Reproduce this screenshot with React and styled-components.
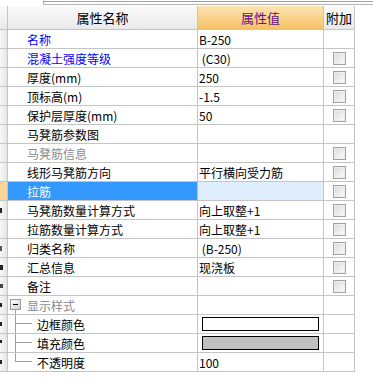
import React from "react";
import styled, { createGlobalStyle, css } from "styled-components";

const Global = createGlobalStyle`
  html, body { margin: 0; padding: 0; background: #fff; }
  body {
    font-family: "Noto Sans CJK SC", "Noto Sans", sans-serif;
    font-size: 12px;
    color: #000;
  }
`;

const Page = styled.div`
  width: 373px;
  height: 384px;
  background: #fff;
  overflow: hidden;
`;

const TopStrip = styled.div`
  display: flex;
  height: 6px;
`;

const StripSpacer = styled.div`
  width: 43px;
`;

const StripFrame = styled.div`
  flex: 1;
  box-sizing: border-box;
  height: 5px;
  border-left: 1px solid #a8a8a8;
  border-top: 1px solid #fff;
  border-bottom: 1px solid #b4b4b4;
  box-shadow: inset 0 1px 0 #a0a0a0;
`;

const Grid = styled.div`
  display: grid;
  grid-template-columns: 8px 190px 126px 31px;
  width: 355px;
`;

const cellBase = css`
  box-sizing: border-box;
  border-right: 1px solid #c4c4c4;
  border-bottom: 1px solid #c4c4c4;
  display: flex;
  align-items: center;
  overflow: hidden;
  white-space: pre;
`;

const HeadCell = styled.div`
  ${cellBase};
  height: 24px;
  justify-content: center;
  font-size: 13px;
  background: ${(p) =>
    p.$accent
      ? "linear-gradient(#fde4b4, #f5c264)"
      : "linear-gradient(#fbfbfb, #e9e9e9)"};
  color: ${(p) => (p.$accent ? "#68108c" : "#000")};
`;

const GutterCell = styled.div`
  ${cellBase};
  height: 19px;
  justify-content: flex-start;
  background: ${(p) =>
    p.$active ? "#fbd59a" : "linear-gradient(90deg, #f6f6f6, #e6e6e6)"};
`;

/* the clipped right edge of a row number, seen as a small mark */
const Mark = styled.span`
  width: ${(p) => p.$w}px;
  height: ${(p) => p.$h}px;
  background: ${(p) => p.$color || "#222"};
  margin-top: ${(p) => p.$dy || 0}px;
`;

const NameCell = styled.div`
  ${cellBase};
  height: 19px;
  padding-left: ${(p) => (p.$tree ? "0" : "19px")};
  background: ${(p) => (p.$active ? "#3399ff" : "#fff")};
  color: ${(p) =>
    p.$active ? "#fff" : p.$tone === "blue" ? "#0000ff" : p.$tone === "gray" ? "#8a8a8a" : "#000"};
`;

const ValueCell = styled.div`
  ${cellBase};
  height: 19px;
  padding-left: ${(p) => (p.$swatch ? "4px" : "1px")};
  background: ${(p) => (p.$active ? "#dfeeff" : "#fff")};
`;

const ExtraCell = styled.div`
  ${cellBase};
  height: 19px;
  justify-content: center;
  padding-left: 1px;
`;

const CheckBox = styled.span`
  box-sizing: border-box;
  width: 13px;
  height: 13px;
  border: 1px solid #a2a2a2;
  background: linear-gradient(135deg, #d8d8d8, #f2f2f2 70%, #fafafa);
  box-shadow: inset 0 0 0 1px #eeeeee;
`;

const Swatch = styled.span`
  box-sizing: border-box;
  width: 117px;
  height: 14px;
  border: 1px solid #000;
  background: ${(p) => p.$fill};
`;

const Expander = () => (
  <svg width="19" height="18" viewBox="0 0 19 18" style={{ flex: "none" }}>
    <defs>
      <linearGradient id="exg" x1="0" y1="0" x2="1" y2="1">
        <stop offset="0" stopColor="#ffffff" />
        <stop offset="1" stopColor="#cfcfcf" />
      </linearGradient>
    </defs>
    <line x1="7.5" y1="14" x2="7.5" y2="18" stroke="#a0a0a0" />
    <rect x="2.5" y="3.5" width="10" height="10" fill="url(#exg)" stroke="#9a9a9a" />
    <line x1="5" y1="8.5" x2="10" y2="8.5" stroke="#000" />
  </svg>
);

const Connector = ({ last }) => (
  <svg width="29" height="18" viewBox="0 0 29 18" style={{ flex: "none" }}>
    <line x1="7.5" y1="0" x2="7.5" y2={last ? 9 : 18} stroke="#a0a0a0" />
    <line x1="7.5" y1="8.5" x2="24" y2="8.5" stroke="#a0a0a0" />
  </svg>
);

const marks = {
  10: { w: 2, h: 5 },
  12: { w: 2, h: 5, color: "#555" },
  13: { w: 3, h: 5 },
  14: { w: 3, h: 4, color: "#444" },
  15: { w: 2, h: 4 },
  16: { w: 2, h: 4 },
  17: { w: 2, h: 3, dy: -4 },
  18: { w: 2, h: 4 },
};

const rows = [
  { name: "名称", value: "B-250", tone: "blue", check: false },
  { name: "混凝土强度等级", value: " (C30)", tone: "blue", check: true },
  { name: "厚度(mm)", value: "250", check: true },
  { name: "顶标高(m)", value: "-1.5", check: true },
  { name: "保护层厚度(mm)", value: "50", check: true },
  { name: "马凳筋参数图", value: "", check: false },
  { name: "马凳筋信息", value: "", tone: "gray", check: true },
  { name: "线形马凳筋方向", value: "平行横向受力筋", check: true },
  { name: "拉筋", value: "", check: true, active: true },
  { name: "马凳筋数量计算方式", value: "向上取整+1", check: true },
  { name: "拉筋数量计算方式", value: "向上取整+1", check: true },
  { name: "归类名称", value: " (B-250)", check: true },
  { name: "汇总信息", value: "现浇板", check: true },
  { name: "备注", value: "", check: true },
  { name: "显示样式", value: "", tone: "gray", tree: "group" },
  { name: "边框颜色", swatch: "#ffffff", tree: "child" },
  { name: "填充颜色", swatch: "#c0c0c0", tree: "child" },
  { name: "不透明度", value: "100", tree: "last" },
];

export default function App() {
  return (
    <Page>
      <Global />
      <TopStrip>
        <StripSpacer />
        <StripFrame />
      </TopStrip>
      <Grid>
        <HeadCell />
        <HeadCell>属性名称</HeadCell>
        <HeadCell $accent>属性值</HeadCell>
        <HeadCell>附加</HeadCell>
        {rows.map((r, i) => {
          const n = i + 1;
          const m = marks[n];
          return (
            <React.Fragment key={r.name}>
              <GutterCell $active={r.active}>
                {m && <Mark $w={m.w} $h={m.h} $color={m.color} $dy={m.dy} />}
              </GutterCell>
              <NameCell $tone={r.tone} $active={r.active} $tree={!!r.tree}>
                {r.tree === "group" && <Expander />}
                {(r.tree === "child" || r.tree === "last") && (
                  <Connector last={r.tree === "last"} />
                )}
                {r.name}
              </NameCell>
              <ValueCell $active={r.active} $swatch={!!r.swatch}>
                {r.swatch ? <Swatch $fill={r.swatch} /> : r.value}
              </ValueCell>
              <ExtraCell>{r.check && <CheckBox />}</ExtraCell>
            </React.Fragment>
          );
        })}
      </Grid>
    </Page>
  );
}
